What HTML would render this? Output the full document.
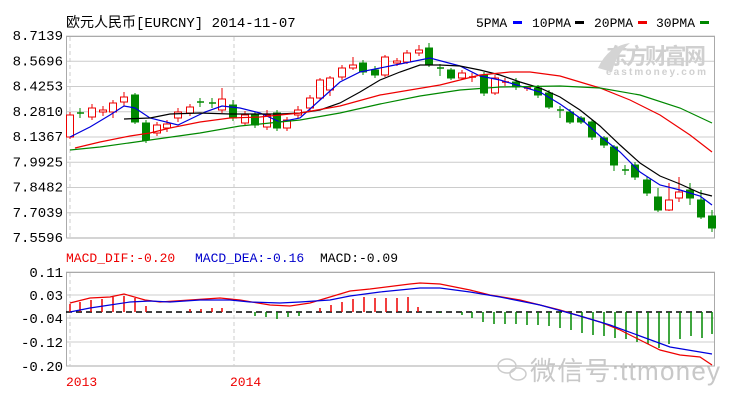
<!DOCTYPE html>
<html><head><meta charset="utf-8"><style>
body{margin:0;background:#fff;width:744px;height:405px;overflow:hidden;font-family:"Liberation Mono","Noto Sans CJK SC",monospace}
svg{display:block}
</style></head><body>
<svg id="s" width="744" height="405" xmlns="http://www.w3.org/2000/svg" font-family="Liberation Mono, Noto Sans CJK SC, monospace" font-size="13">
<text x="66" y="27" style="font-size:14px" fill="#000">欧元人民币[EURCNY] 2014-11-07</text>
<text x="476" y="27" fill="#000">5PMA</text><rect x="513" y="21" width="9" height="3" fill="#0000ff"/>
<text x="532" y="27" fill="#000">10PMA</text><rect x="575" y="21" width="9" height="3" fill="#000"/>
<text x="594" y="27" fill="#000">20PMA</text><rect x="638" y="21" width="9" height="3" fill="#e00"/>
<text x="656" y="27" fill="#000">30PMA</text><rect x="700" y="21" width="9" height="3" fill="#080"/>
<g id="g"></g>
<text x="606" y="64" style="font-size:22px;font-weight:bold;font-family:'Noto Sans CJK SC',sans-serif" fill="#d0d0d0" textLength="100">东方财富网</text>
<text x="606" y="75" style="font-size:10px;font-weight:bold;font-family:'Liberation Sans',sans-serif" fill="#d0d0d0" textLength="100">eastmoney.com</text>
<path d="M598 68 Q608 46 630 43 Q616 54 612 72 Z" fill="#d4d4d4"/>
<text x="66" y="262" fill="#e00">MACD_DIF:-0.20</text>
<text x="195" y="262" fill="#0000cc">MACD_DEA:-0.16</text>
<text x="320" y="262" fill="#000">MACD:-0.09</text>
<text x="66" y="386" fill="#e00">2013</text>
<text x="230" y="386" fill="#e00">2014</text>
<text x="530" y="380" style="font-size:26px;font-family:'Liberation Sans','Noto Sans CJK SC',sans-serif" fill="#c8c8c8" textLength="190">微信号:ttmoney</text>
<ellipse cx="507" cy="366" rx="9" ry="7" fill="none" stroke="#ccc" stroke-width="1.5"/>
<ellipse cx="518" cy="374" rx="8" ry="6" fill="none" stroke="#ccc" stroke-width="1.5"/>
</svg>
<script>
var g=document.getElementById('g'),h='';
function L(x1,y1,x2,y2,c,w,d){h+='<line x1="'+x1+'" y1="'+y1+'" x2="'+x2+'" y2="'+y2+'" stroke="'+c+'" stroke-width="'+(w||1)+'"'+(d?' stroke-dasharray="'+d+'"':'')+'/>';}
function T(x,y,t){h+='<text x="'+x+'" y="'+y+'" text-anchor="end" font-size="14" fill="#000">'+t+'</text>';}
var labs=['8.7139','8.5696','8.4253','8.2810','8.1367','7.9925','7.8482','7.7039','7.5596'];
for(var i=0;i<9;i++){var y=36+i*25.25;L(66,y,715,y,'#ccc');T(63,y+4,labs[i]);}
h+='<rect x="66.5" y="36.5" width="648" height="201.5" fill="none" stroke="#aaa"/>';
L(70,37,70,238,'#ccc',1,'4,3');L(234,37,234,238,'#ccc',1,'4,3');
var ml=[['0.11',272],['0.03',295],['-0.04',318],['-0.12',342],['-0.20',366]];
ml.forEach(function(m){L(66,m[1],715,m[1],'#ccc');T(63,m[1]+5,m[0]);});
h+='<rect x="66.5" y="272.5" width="648" height="93.5" fill="none" stroke="#aaa"/>';
L(70,273,70,366,'#ccc',1,'4,3');L(234,273,234,366,'#ccc',1,'4,3');
var R='#e00',G='#080';
var cs=[[70,137,115,112,139,R],[80,113,113,108,118,G],[92,117,108,104,120,R],[103,112,110,106,116,R],[113,112,103,100,118,R],[124,102,97,92,106,R],[135,95,122,93,124,G],[146,123,140,120,143,G],[157,133,125,122,136,R],[167,128,124,120,132,R],[178,118,112,108,122,R],[190,113,107,104,116,R],[200,102,102,98,107,G],[212,103,103,98,108,G],[222,110,99,88,113,R],[233,105,118,100,121,G],[245,123,115,111,126,R],[255,115,125,112,128,G],[267,127,115,110,130,R],[277,113,128,110,131,G],[287,128,120,117,131,R],[298,115,110,106,118,R],[310,108,98,95,111,R],[320,98,80,78,100,R],[330,90,78,76,96,R],[342,77,68,65,80,R],[353,68,65,57,70,R],[363,63,72,60,75,G],[375,70,75,66,78,G],[385,75,57,55,77,R],[397,63,61,58,66,R],[407,62,53,50,64,R],[419,53,50,45,56,R],[429,48,65,43,67,G],[440,68,68,64,76,G],[451,70,78,68,80,G],[462,78,73,70,80,R],[472,77,77,73,82,R],[484,75,93,72,96,G],[495,93,78,75,95,R],[505,82,82,78,86,R],[516,82,87,78,90,G],[527,88,88,86,91,R],[538,88,95,85,98,G],[549,93,107,90,109,G],[560,110,110,106,118,G],[570,112,122,109,124,G],[581,118,122,116,124,G],[592,122,137,120,140,G],[604,138,145,136,148,G],[614,147,165,145,171,G],[625,170,170,165,175,G],[635,165,177,162,180,G],[647,180,193,177,196,G],[658,197,210,188,212,G],[669,210,200,183,211,R],[679,198,192,177,202,R],[690,190,198,183,205,G],[701,200,217,190,219,G],[712,216,228,210,232,G]];
cs.forEach(function(c){var x=c[0],t=Math.min(c[1],c[2]),b=Math.max(c[1],c[2]),col=c[5];
 if(col==R){L(x,c[3],x,t,col);L(x,b,x,c[4],col);}else L(x,c[3],x,c[4],col);
 if(b-t<2){L(x-3,t,x+4,t,col,1.5);}
 else h+='<rect x="'+(x-3.5)+'" y="'+t+'" width="7" height="'+(b-t)+'" fill="'+(col==R?'#fff':G)+'" stroke="'+col+'"/>';});
function P(pts,c){h+='<polyline fill="none" stroke="'+c+'" stroke-width="1.2" points="'+pts.map(function(p){return p.join(',')}).join(' ')+'"/>';}
P([[70,137],[90,127],[110,115],[124,106],[135,108],[150,118],[178,125],[205,112],[222,106],[240,108],[260,113],[280,122],[300,118],[320,100],[340,82],[360,72],[390,66],[420,60],[430,58],[460,66],[480,76],[500,80],[520,86],[540,92],[560,104],[580,118],[600,136],[620,152],[640,172],[660,185],[680,190],[700,196],[712,205]],'#0000dd');
P([[124,119],[150,118],[170,114],[200,113],[230,114],[280,114],[300,113],[320,110],[340,103],[360,92],[380,80],[400,72],[420,65],[440,65],[460,66],[480,70],[500,75],[520,82],[540,88],[560,97],[580,110],[600,126],[620,145],[640,163],[660,176],[680,184],[700,193],[712,196]],'#000');
P([[75,148],[100,142],[130,136],[150,133],[170,128],[200,122],[230,118],[260,117],[300,113],[340,106],[380,95],[410,90],[440,85],[460,80],[480,75],[510,72],[530,72],[560,76],[600,88],[630,100],[660,115],[690,135],[712,152]],'#e00');
P([[70,150],[100,147],[150,140],[200,133],[240,126],[280,122],[300,120],[340,113],[380,104],[420,96],[460,90],[500,87],[560,86],[600,88],[640,95],[680,108],[712,123]],'#080');
L(66,312,715,312,'#000',1.5,'6,4');
var hb=[[70,-8],[80,-10],[91,-12],[102,-13],[113,-15],[124,-16],[135,-14],[146,-6],[190,-3],[201,-3],[212,-4],[222,-4],[255,4],[266,5],[277,7],[288,5],[299,4],[320,-4],[331,-7],[342,-10],[353,-13],[364,-15],[375,-14],[386,-14],[397,-14],[408,-15],[418,-5],[440,1],[462,3],[472,6],[483,10],[494,12],[505,12],[516,12],[527,13],[538,13],[549,14],[560,16],[571,18],[582,21],[593,23],[604,24],[615,26],[626,27],[637,30],[648,32],[659,36],[669,32],[680,27],[691,24],[702,26],[712,22]];
hb.forEach(function(b){L(b[0],312,b[0],312+b[1],b[1]<0?'#e00':'#080',1.5);});
P([[70,303],[90,298],[110,297],[124,294],[145,300],[160,302],[190,300],[220,298],[240,300],[270,305],[290,306],[310,303],[330,297],[350,291],[370,289],[410,284],[420,283],[440,284],[470,290],[490,295],[520,300],[560,310],[600,322],[620,330],[640,340],[660,350],[680,355],[700,357],[712,365]],'#e00');
P([[70,312],[90,308],[110,305],[130,302],[150,301],[170,302],[200,300],[230,300],[250,302],[280,303],[300,302],[330,300],[350,296],[380,292],[420,288],[440,288],[470,292],[500,297],[540,305],[580,316],[610,325],[640,336],[670,347],[700,352],[712,354]],'#0000dd');
g.innerHTML=h;
</script>
</body></html>
